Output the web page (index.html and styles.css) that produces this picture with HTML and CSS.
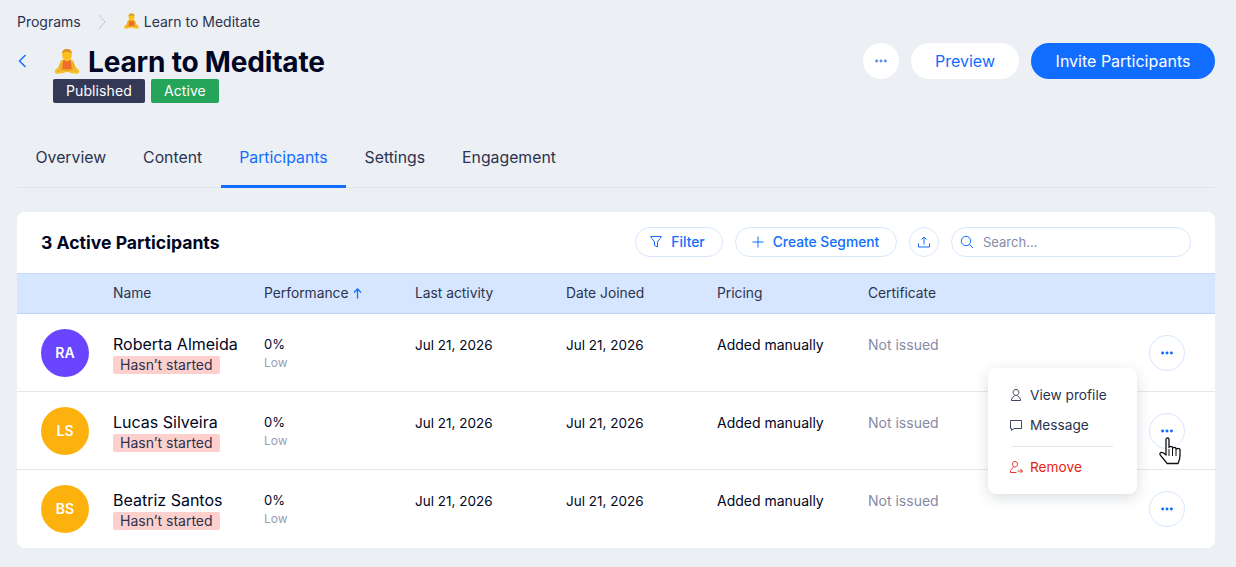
FILE: index.html
```html
<!DOCTYPE html>
<html lang="en">
<head>
  <meta charset="UTF-8" />
  <title>Learn to Meditate</title>
  <link rel="stylesheet" href="styles.css">
</head>
<body>
  <svg class="defs" width="0" height="0">
    <symbol id="yogi" viewBox="0 0 32 32">
      <path d="M11 13c-1 0-2 1-2.500 2.500L6.500 21 3 24.500c-2 2-1 4.500 2 5l7-1 4-1.500 4 1.500 7 1c3-.5 4-3 2-5L25.500 21l-2-5.500C23 14 22 13 21 13z" fill="#fbc02d"/>
      <path d="M10.500 5.500c0-3 2.500-4.500 5.500-4.500s5.500 1.500 5.500 4.500V9c0 2.500-2.500 5-5.500 5s-5.500-2.500-5.500-5z" fill="#fcc21b"/>
      <path d="M10.500 6.500c0-4 2.500-5.500 5.500-5.500s5.500 1.500 5.500 5.500c-1-1.500-2-2-5.500-2s-4.500.5-5.500 2z" fill="#d9962b"/>
      <path d="M11.500 14h2c.5 1.500 4.500 1.500 5 0h2l1 9.500c-3 1.500-8 1.500-11 0z" fill="#ef6c2a"/>
      <path d="M5 27c3-2.500 7-2.500 11-.5 4-2 8-2 11 .5M9.500 17L8 22l4 3M22.500 17l1.500 5-4 3" fill="none" stroke="#d6951c" stroke-width=".9"/>
    </symbol>
    <symbol id="dots" viewBox="0 0 16 4">
      <circle cx="3" cy="2" r="1.700"/>
      <circle cx="8" cy="2" r="1.700"/>
      <circle cx="13" cy="2" r="1.700"/>
    </symbol>
  </svg>

  <div class="crumbs">
    <span>Programs</span>
    <svg class="crumb-arrow" width="8" height="16" viewBox="0 0 8 16"><path d="M1 1l6 7-6 7" fill="none" stroke="#c3c8d8" stroke-width="1"/></svg>
    <span class="crumb-current"><svg class="yogi-sm" width="17" height="17"><use href="#yogi"/></svg> Learn to Meditate</span>
  </div>

  <header class="head">
    <svg class="back" width="9" height="14" viewBox="0 0 9 14"><path d="M7.500 1L1.500 7l6 6" fill="none" stroke="#116dff" stroke-width="1.400"/></svg>
    <div class="head-main">
      <h1><svg class="yogi-lg" width="28" height="28"><use href="#yogi"/></svg> Learn to Meditate</h1>
      <div class="tags">
        <span class="tag tag-dark">Published</span>
        <span class="tag tag-green">Active</span>
      </div>
    </div>
    <div class="head-actions">
      <button class="btn-round white"><svg width="14" height="4"><use href="#dots"/></svg></button>
      <button class="btn white btn-preview">Preview</button>
      <button class="btn primary">Invite Participants</button>
    </div>
  </header>

  <nav class="tabs">
    <a>Overview</a>
    <a>Content</a>
    <a class="active">Participants</a>
    <a>Settings</a>
    <a>Engagement</a>
  </nav>

  <section class="card">
    <div class="card-top">
      <h2>3 Active Participants</h2>
      <div class="tools">
        <button class="pill pill-filter">
          <svg width="14" height="14" viewBox="0 0 14 14"><path d="M1.500 1.500h11L8.500 7v5l-3-1.500V7z" fill="none" stroke="#116dff"/></svg>
          Filter
        </button>
        <button class="pill pill-segment">
          <svg width="14" height="14" viewBox="0 0 14 14"><path d="M7 1.500v11M1.500 7h11" fill="none" stroke="#116dff"/></svg>
          Create Segment
        </button>
        <button class="pill-icon">
          <svg width="16" height="16" viewBox="0 0 16 16"><path d="M8 10.500V3M5.500 5.500L8 3l2.500 2.500M2.500 9.500v3.500h11V9.500" fill="none" stroke="#116dff"/></svg>
        </button>
        <div class="search">
          <svg width="14" height="14" viewBox="0 0 14 14"><circle cx="6" cy="6" r="4.700" fill="none" stroke="#116dff"/><path d="M9.500 9.500L13 13" stroke="#116dff"/></svg>
          <span>Search...</span>
        </div>
      </div>
    </div>

    <div class="row head-row">
      <div></div>
      <div>Name</div>
      <div>Performance <svg class="sort" width="9" height="11" viewBox="0 0 9 11"><path d="M4.500 10.500V1M1 4.500L4.500 1 8 4.500" fill="none" stroke="#116dff" stroke-width="1.300"/></svg></div>
      <div>Last activity</div>
      <div>Date Joined</div>
      <div>Pricing</div>
      <div>Certificate</div>
      <div></div>
    </div>

    <div class="row body-row">
      <div class="avatar purple">RA</div>
      <div class="name-cell"><div class="name">Roberta Almeida</div><span class="status">Hasn’t started</span></div>
      <div class="perf"><div>0%</div><div class="low">Low</div></div>
      <div class="cell date">Jul 21, 2026</div>
      <div class="cell date">Jul 21, 2026</div>
      <div class="cell">Added manually</div>
      <div class="cell muted">Not issued</div>
      <button class="btn-round outline"><svg width="14" height="4"><use href="#dots"/></svg></button>
    </div>

    <div class="row body-row">
      <div class="avatar amber">LS</div>
      <div class="name-cell"><div class="name">Lucas Silveira</div><span class="status">Hasn’t started</span></div>
      <div class="perf"><div>0%</div><div class="low">Low</div></div>
      <div class="cell date">Jul 21, 2026</div>
      <div class="cell date">Jul 21, 2026</div>
      <div class="cell">Added manually</div>
      <div class="cell muted">Not issued</div>
      <button class="btn-round outline"><svg width="14" height="4"><use href="#dots"/></svg></button>
    </div>

    <div class="row body-row">
      <div class="avatar amber">BS</div>
      <div class="name-cell"><div class="name">Beatriz Santos</div><span class="status">Hasn’t started</span></div>
      <div class="perf"><div>0%</div><div class="low">Low</div></div>
      <div class="cell date">Jul 21, 2026</div>
      <div class="cell date">Jul 21, 2026</div>
      <div class="cell">Added manually</div>
      <div class="cell muted">Not issued</div>
      <button class="btn-round outline"><svg width="14" height="4"><use href="#dots"/></svg></button>
    </div>
  </section>

  <div class="menu">
    <div class="menu-item">
      <svg width="14" height="14" viewBox="0 0 14 14"><path d="M7 1.500c-1.700 0-2.800 1.200-2.800 2.800S5.300 7.500 7 7.500s2.800-1.600 2.800-3.200S8.700 1.500 7 1.500zM5.500 7.500L2.500 11v1.500h9V11l-3-3.500" fill="none" stroke="#2b3350" stroke-width=".9"/></svg>
      View profile
    </div>
    <div class="menu-item">
      <svg width="14" height="14" viewBox="0 0 14 14"><path d="M1.500 2.500h11v8H5L2.500 12.500v-2h-1z" fill="none" stroke="#2b3350" stroke-width=".9"/></svg>
      Message
    </div>
    <div class="menu-sep"></div>
    <div class="menu-item danger">
      <svg width="14" height="14" viewBox="0 0 14 14"><path d="M6 1.500c-1.500 0-2.500 1.100-2.500 2.600S4.500 7 6 7s2.500-1.400 2.500-2.900S7.500 1.500 6 1.500zM4.500 7L1.500 10.500v2h6M8.500 11h5M11.500 9l2 2-2 2" fill="none" stroke="#e62214" stroke-width=".9"/></svg>
      Remove
    </div>
  </div>

  <svg class="cursor" width="24" height="30" viewBox="0 0 24 30">
    <path d="M8 2.500c0-2 3-2 3 0v8c0-1.500 3.500-1.500 3.500 0v1c0-1.500 3.500-1.500 3.500 0v1c0-1.500 4-1.500 4 0v6c0 3.500-1 5.500-2 8H9c-1-2-6-7-7-9-.7-1.500 1.500-3 3.500-1.500L8 18z" fill="#fff" stroke="#111" stroke-width="1.300" stroke-linejoin="round"/>
    <path d="M11 12v7M14.500 12v7M18 13v6" stroke="#111" stroke-width="1"/>
  </svg>
</body>
</html>
```

FILE: styles.css
```css
* {
  box-sizing: border-box;
}

body {
  margin: 0;
  height: 567px;
  overflow: hidden;
  position: relative;
  padding: 0 21px 0 17px;
  background: #eceff4;
  color: #000624;
  font-family: Inter, "Liberation Sans", sans-serif;
  font-size: 14px;
}

button {
  font-family: inherit;
  cursor: pointer;
}

.defs {
  position: absolute;
}

.crumbs {
  height: 43px;
  display: flex;
  align-items: center;
  color: #2b3350;
  font-size: 14px;
}

.crumb-arrow {
  margin: 0 17px;
}

.crumb-current {
  display: flex;
  align-items: center;
  gap: 4px;
}

.head {
  display: flex;
  height: 61px;
}

.back {
  margin: 11px 0 0 1px;
}

.head-main {
  margin-left: 26px;
}

h1 {
  margin: 0;
  height: 36px;
  padding-top: 2px;
  display: flex;
  align-items: center;
  gap: 7px;
  font-size: 28px;
  font-weight: 700;
  letter-spacing: -0.18px;
  line-height: 36px;
}

.tags {
  display: flex;
  gap: 6px;
}

.tag {
  height: 24px;
  padding: 0 13px;
  border-radius: 2px;
  color: #fff;
  font-size: 14px;
  letter-spacing: 0.1px;
  line-height: 24px;
}

.tag-dark {
  background: #343a56;
}

.tag-green {
  background: #25a55a;
}

.head-actions {
  margin-left: auto;
  display: flex;
  gap: 12px;
  height: 36px;
}

.btn {
  height: 36px;
  border: none;
  border-radius: 18px;
  font-size: 16px;
  font-weight: 400;
  padding: 0 24px;
}

.btn.white {
  background: #fff;
  color: #116dff;
}

.btn.primary {
  width: 184px;
  padding: 0;
  background: #116dff;
  color: #fff;
}

.btn-round {
  width: 36px;
  height: 36px;
  border-radius: 50%;
  border: none;
  padding: 0;
  display: flex;
  align-items: center;
  justify-content: center;
  fill: #116dff;
}

.btn-round.white {
  background: #fff;
  fill: #5a8ff0;
}

.btn-round.outline {
  background: #fff;
  border: 1px solid #d6e6fe;
}

.tabs {
  margin-top: 27px;
  height: 57px;
  border-bottom: 1px solid #dfe5eb;
  display: flex;
}

.tabs a {
  height: 57px;
  padding: 15px 18.5px 0;
  font-size: 15.8px;
  line-height: 24px;
  color: #2b3350;
}

.tabs a.active {
  color: #116dff;
  border-bottom: 3px solid #116dff;
}

.card {
  margin-top: 24px;
  height: 336px;
  background: #fff;
  border-radius: 8px;
  overflow: hidden;
}

.card-top {
  height: 61px;
  padding: 0 24px 1px;
  display: flex;
  align-items: center;
  justify-content: space-between;
}

h2 {
  margin: 0;
  font-size: 17.6px;
  font-weight: 700;
}

.tools {
  display: flex;
  gap: 12px;
  align-items: center;
}

.pill {
  height: 30px;
  display: flex;
  align-items: center;
  background: #fff;
  border: 1px solid #d6e6fe;
  border-radius: 15px;
  color: #116dff;
  font-size: 13.8px;
  font-weight: 500;
  padding: 0;
  justify-content: center;
}

.pill-filter {
  width: 88px;
  gap: 8px;
  padding-right: 4px;
}

.pill-segment {
  width: 162px;
  gap: 8px;
  padding-right: 2px;
}

.pill-icon {
  width: 30px;
  height: 30px;
  padding: 0;
  display: flex;
  align-items: center;
  justify-content: center;
  background: #fff;
  border: 1px solid #d6e6fe;
  border-radius: 50%;
}

.search {
  width: 240px;
  height: 30px;
  border: 1px solid #d6e6fe;
  border-radius: 15px;
  display: flex;
  align-items: center;
  gap: 9px;
  padding-left: 8px;
  color: #868aa5;
  font-size: 13px;
}

.row {
  display: grid;
  grid-template-columns: 72px repeat(6, 151px) 1fr;
  align-items: center;
  padding-left: 24px;
  padding-right: 30px;
}

.head-row {
  height: 41px;
  padding-bottom: 2px;
  background: #d6e6fe;
  border-bottom: 1px solid #bcd3f9;
  border-top: 1px solid #c4daff;
  color: #2b3350;
  font-size: 13.8px;
}

.sort {
  margin-left: 1px;
  vertical-align: -1px;
}

.body-row {
  height: 78px;
  border-bottom: 1px solid #e4e7ed;
}

.body-row:last-child {
  border-bottom-color: transparent;
}

.body-row .btn-round {
  justify-self: end;
}

.avatar {
  width: 48px;
  height: 48px;
  border-radius: 50%;
  display: flex;
  align-items: center;
  justify-content: center;
  color: #fff;
  font-size: 14px;
  font-weight: 600;
}

.purple {
  background: #6a45ff;
}

.amber {
  background: #fdb10c;
}

.name {
  font-size: 16px;
  line-height: 20px;
}

.status {
  display: inline-block;
  height: 18px;
  padding: 0 7px;
  margin-top: 2px;
  background: #fdd0cd;
  border-radius: 2px;
  color: #2b3350;
  font-size: 14px;
  line-height: 18px;
}

.name-cell {
  margin-top: 2px;
}

.perf {
  font-size: 13px;
  line-height: 18px;
  margin-top: 1px;
}

.low {
  margin-top: 1px;
  color: #9a9eb5;
  font-size: 12px;
  line-height: 18px;
}

.cell {
  font-size: 14px;
  margin-top: -16px;
}

.cell.date {
  font-size: 13.5px;
}

.cell.muted {
  color: #868aa5;
}

.menu {
  position: absolute;
  left: 988px;
  top: 368px;
  width: 149px;
  height: 126px;
  background: #fff;
  border-radius: 8px;
  box-shadow: 0 4px 14px rgba(22, 45, 61, 0.16);
  padding: 12px 0 0 21px;
}

.menu-item {
  display: flex;
  align-items: center;
  gap: 7px;
  height: 30px;
  color: #2b3350;
  font-size: 13.7px;
}

.menu-item.danger {
  color: #e62214;
}

.menu-sep {
  width: 101px;
  height: 1px;
  margin: 6px 0 5px 3px;
  background: #dfe5eb;
}

.cursor {
  position: absolute;
  left: 1158px;
  top: 437px;
}
```
